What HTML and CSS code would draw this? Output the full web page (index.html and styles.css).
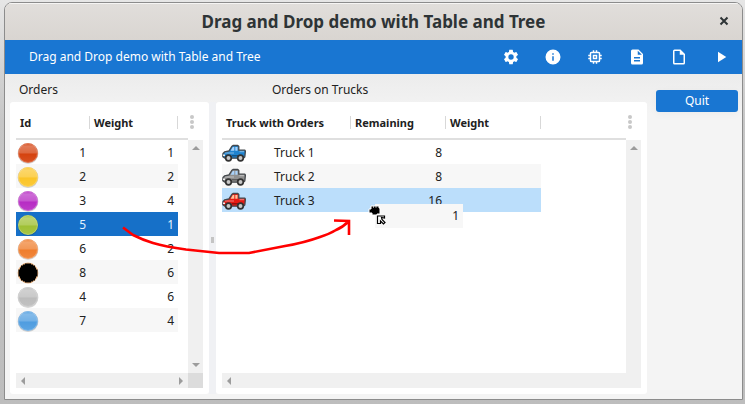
FILE: index.html
```html
<!DOCTYPE html>
<html lang="en">
<head>
<meta charset="utf-8">
<title>Drag and Drop demo with Table and Tree</title>
<link rel="stylesheet" href="styles.css">
</head>
<body>
<svg class="defs" aria-hidden="true">
  <defs>
    <linearGradient id="shade" x1="0" y1="0" x2="0" y2="1">
      <stop offset="0" stop-color="#fff" stop-opacity=".1"/>
      <stop offset=".15" stop-color="#fff" stop-opacity=".3"/>
      <stop offset=".5" stop-color="#fff" stop-opacity=".2"/>
      <stop offset=".55" stop-color="#fff" stop-opacity="0"/>
      <stop offset="1" stop-color="#fff" stop-opacity=".08"/>
    </linearGradient>
    <symbol id="ball" viewBox="1 1 22 22">
      <circle cx="12" cy="12.600" r="10.400" fill="#000" opacity=".16"/>
      <circle cx="12" cy="12" r="10" fill="currentColor"/>
      <circle cx="12" cy="12" r="9.500" fill="url(#shade)" stroke="#fff" stroke-opacity=".25"/>
    </symbol>
    <symbol id="truck" viewBox="0 0 24 18">
      <path d="M1 9.500 2.500 8 7 6.800 10 2.200 11 1.500h4.800l1 1V6.200h6l.6 1-.6 5.800-1.600 1.200H3L.8 12.600z" fill="currentColor" stroke="#44484c" stroke-width="1.300" stroke-linejoin="round"/>
      <path class="glass" d="m8.600 6.700 2.200-3.600h1.500v3.600z"/>
      <path class="glass" d="M13.300 3h2.200v3.700h-2.200z"/>
      <path d="M3 9h9M17.500 7.700H22" stroke="#fff" stroke-opacity=".45"/>
      <path d="M10 11.800h6" stroke="#000" stroke-opacity=".35" stroke-width="1.500"/>
      <path d="M1 10.500h2v1.600H1z" fill="#eee"/>
      <g fill="#c8c8c8" stroke="#333" stroke-width="1.700">
        <circle cx="6.500" cy="14" r="2.800"/><circle cx="18.500" cy="14" r="2.800"/>
      </g>
    </symbol>
  </defs>
</svg>
<main class="window">
  <header class="titlebar">
    <h1>Drag and Drop demo with Table and Tree</h1>
    <button class="close" aria-label="Close"><svg viewBox="0 0 10 10"><path d="m1.500 1.500 7 7m0-7-7 7"/></svg></button>
  </header>
  <nav class="toolbar">
    <span class="app-name">Drag and Drop demo with Table and Tree</span>
    <button aria-label="Settings"><svg viewBox="0 0 24 24"><path d="M19.14 12.94c.04-.3.06-.61.06-.94 0-.32-.02-.64-.07-.94l2.03-1.58a.49.49 0 0 0 .12-.61l-1.92-3.32a.49.49 0 0 0-.59-.22l-2.39.96c-.5-.38-1.03-.7-1.62-.94l-.36-2.54a.48.48 0 0 0-.48-.41h-3.84c-.24 0-.43.17-.47.41l-.36 2.54c-.59.24-1.13.57-1.62.94l-2.39-.96a.48.48 0 0 0-.59.22L2.74 8.87c-.12.21-.08.47.12.61l2.03 1.58c-.05.3-.09.63-.09.94s.02.64.07.94l-2.03 1.58a.49.49 0 0 0-.12.61l1.92 3.32c.12.22.37.29.59.22l2.39-.96c.5.38 1.03.7 1.62.94l.36 2.54c.05.24.24.41.48.41h3.84c.24 0 .44-.17.47-.41l.36-2.54c.59-.24 1.13-.56 1.62-.94l2.39.96c.22.08.47 0 .59-.22l1.92-3.32a.48.48 0 0 0-.12-.61zM12 15.600a3.600 3.600 0 1 1 0-7.200 3.600 3.600 0 0 1 0 7.200z"/></svg></button>
    <button aria-label="Info"><svg viewBox="0 0 24 24"><path d="M12 2a10 10 0 1 0 0 20 10 10 0 0 0 0-20zm1 15h-2v-6h2zm0-8h-2V7h2z"/></svg></button>
    <button aria-label="Memory"><svg viewBox="0 0 24 24"><path d="M15 9H9v6h6zm-2 4h-2v-2h2zm8-2V9h-2V7a2 2 0 0 0-2-2h-2V3h-2v2h-2V3H9v2H7a2 2 0 0 0-2 2v2H3v2h2v2H3v2h2v2a2 2 0 0 0 2 2h2v2h2v-2h2v2h2v-2h2a2 2 0 0 0 2-2v-2h2v-2h-2v-2zm-4 6H7V7h10z"/></svg></button>
    <button aria-label="Document"><svg viewBox="0 0 24 24"><path d="M14 2H6a2 2 0 0 0-2 2v16a2 2 0 0 0 2 2h12a2 2 0 0 0 2-2V8zm2 16H8v-2h8zm0-4H8v-2h8zm-3-5V3.500L18.500 9z"/></svg></button>
    <button aria-label="New file"><svg viewBox="0 0 24 24"><path d="M6 2a2 2 0 0 0-2 2v16a2 2 0 0 0 2 2h12a2 2 0 0 0 2-2V8l-6-6zm7 2v5h5v11H6V4z"/></svg></button>
    <button aria-label="Run"><svg viewBox="0 0 24 24"><path d="M8 5v14l11-7z"/></svg></button>
  </nav>
  <div class="content">
    <section class="pane orders">
      <h2>Orders</h2>
      <div class="panel">
        <div class="grid">
          <div class="view">
            <table>
              <colgroup><col class="c-id"><col class="c-rest"></colgroup>
              <thead><tr><th>Id</th><th>Weight</th></tr></thead>
              <tbody>
                <tr><td><div class="cell"><svg class="ball red"><use href="#ball"/></svg>1</div></td><td>1</td></tr>
                <tr><td><div class="cell"><svg class="ball yellow"><use href="#ball"/></svg>2</div></td><td>2</td></tr>
                <tr><td><div class="cell"><svg class="ball purple"><use href="#ball"/></svg>3</div></td><td>4</td></tr>
                <tr class="selected"><td><div class="cell"><svg class="ball green"><use href="#ball"/></svg>5</div></td><td>1</td></tr>
                <tr><td><div class="cell"><svg class="ball orange"><use href="#ball"/></svg>6</div></td><td>2</td></tr>
                <tr><td><div class="cell"><svg class="ball" viewBox="1 1 22 22"><circle cx="12" cy="12" r="10.400" fill="#edb27c"/><path d="M9 2.500h6v1h2v1h2v2h1v2h1.500v7H20v2h-1v2h-2v1h-2v1H9v-1H7v-1H5v-2H4v-2H2.500v-7H4v-2h1v-2h2v-1h2z" fill="#000"/></svg>8</div></td><td>6</td></tr>
                <tr><td><div class="cell"><svg class="ball silver"><use href="#ball"/></svg>4</div></td><td>6</td></tr>
                <tr><td><div class="cell"><svg class="ball blue"><use href="#ball"/></svg>7</div></td><td>4</td></tr>
              </tbody>
            </table>
          </div>
          <button class="more" aria-label="Columns"><i></i><i></i><i></i></button>
          <div class="vbar"><i class="up"></i><i class="down"></i></div>
          <div class="hbar"><i class="left"></i><i class="right"></i></div>
          <div class="corner"></div>
        </div>
      </div>
    </section>
    <div class="splitter"><i></i></div>
    <section class="pane trucks">
      <h2>Orders on Trucks</h2>
      <div class="panel">
        <div class="grid">
          <div class="view">
            <table>
              <colgroup><col class="c-truck"><col class="c-num"><col class="c-num"></colgroup>
              <thead><tr><th>Truck with Orders</th><th>Remaining</th><th>Weight</th></tr></thead>
              <tbody>
                <tr><td><div class="cell"><svg class="truck t-blue"><use href="#truck"/></svg>Truck 1</div></td><td>8</td><td></td></tr>
                <tr><td><div class="cell"><svg class="truck t-gray"><use href="#truck"/></svg>Truck 2</div></td><td>8</td><td></td></tr>
                <tr class="target"><td><div class="cell"><svg class="truck t-red"><use href="#truck"/></svg>Truck 3</div></td><td>16</td><td></td></tr>
              </tbody>
            </table>
          </div>
          <button class="more" aria-label="Columns"><i></i><i></i><i></i></button>
          <div class="vbar"><i class="up"></i></div>
          <div class="hbar"><i class="left"></i></div>
          <div class="corner plain"></div>
        </div>
      </div>
    </section>
    <aside><button class="quit">Quit</button></aside>
  </div>
  <svg class="arrow" viewBox="0 0 236 44" aria-hidden="true"><path d="M3 12.500 13 20c6 3 13 6 20 8 10 3 22 5 33 6.500L99 38h30l36-7c12-2 24-5 35-9 6-2 11-4 16-7 5-2 9-5 13-9M214 5.500 229 6v14"/></svg>
  <div class="ghost">1</div>
  <svg class="cursor" viewBox="0 0 20 20" aria-hidden="true">
    <path d="M1 4h2V1h8v2h1v6H9v1H4V8H1z" fill="#000" stroke="#fff" stroke-width="1"/>
    <path d="M5.500 1v2M8 1v2" stroke="#fff" stroke-width=".6"/>
    <path d="M9.500 11h7v2l-3-.5.500 2 3 3-1.500 1.500-3-3v2.500H9.500z" fill="#fff" stroke="#000" stroke-width="1.200"/>
  </svg>
</main>
</body>
</html>
```
FILE: styles.css
```css
* { box-sizing: border-box; }
body {
  margin: 0;
  height: 100vh;
  padding: 2px 2px 4px 4px;
  background: linear-gradient(#e6e6e6, #c6c6c6 30%, #bdbdbd);
  font: 12px/16px "Noto Sans", sans-serif;
  color: #212121;
}
h1, h2 { margin: 0; }
button { border: 0; padding: 0; font: inherit; background: none; }
.defs { position: absolute; width: 0; height: 0; }

.window {
  position: relative;
  height: 100%;
  display: flex;
  flex-direction: column;
  border: 1px solid #8c8c8c;
  border-radius: 8px 8px 0 0;
  background: #f4f4f4;
  overflow: hidden;
}
.titlebar {
  display: flex;
  align-items: center;
  height: 37px;
  padding-left: 36px;
  background: linear-gradient(#e1dedb, #d9d5d1);
  box-shadow: inset 0 1px #f6f5f4;
}
.titlebar h1 {
  flex: 1;
  text-align: center;
  font-size: 17px;
  line-height: 24px;
  color: #2e3436;
}
.close { width: 36px; height: 24px; }
.close svg { width: 10px; height: 10px; stroke: #2e3436; stroke-width: 2; }

.toolbar {
  display: flex;
  align-items: center;
  height: 34px;
  background: #1976d2;
  color: #fff;
}
.app-name { flex: 1; padding-left: 24px; }
.toolbar button { display: grid; place-items: center; width: 42px; height: 34px; }
.toolbar svg { width: 18px; height: 18px; fill: #fff; }

.content {
  flex: 1;
  display: flex;
  padding: 0 4px 5px 5px;
  background: linear-gradient(#ececec, #f4f4f4 40px);
}
.pane { display: flex; flex-direction: column; }
.pane h2 {
  height: 28px;
  padding: 8px 9px 0;
  font-size: 12px;
  line-height: 16px;
  font-weight: 400;
}
.orders { flex: 0 0 199px; }
.trucks { flex: 1; }
.trucks h2 { padding-left: 56px; }
.panel { flex: 1; padding: 6px; border-radius: 3px; background: #fff; }
.grid {
  height: 100%;
  display: grid;
  grid-template: 32px 1fr 15px / 1fr 15px;
}
.view {
  grid-area: 1 / 1 / 3 / 2;
  background: linear-gradient(#dfdfdf, #dfdfdf) 0 30px / 100% 2px no-repeat;
}

table { table-layout: fixed; border-collapse: collapse; }
.orders table { width: 162px; }
.trucks table { width: 319px; }
.c-id { width: 74px; }
.c-truck { width: 129px; }
th {
  height: 32px;
  padding: 0 4px 2px;
  font-size: 11px;
  text-align: left;
  white-space: nowrap;
  background: linear-gradient(#d8d8d8, #d8d8d8) 100% 8px / 1px 13px no-repeat;
}
td { height: 24px; padding: 2px 4px 0; text-align: right; }
tbody tr:nth-child(even) { background: #f7f7f7; }
tbody .selected:nth-child(n) { background: #1670c8; color: #e3f2fd; }
.target { background: #bbdefb; }
td:first-child { padding-left: 0; }
.cell { display: flex; align-items: center; height: 22px; }
.orders .cell { justify-content: space-between; padding-left: 1px; }
.trucks .cell { gap: 28px; }
.ball { width: 22px; height: 22px; }
.truck { width: 24px; height: 18px; }
.red { color: #d5420f; }
.yellow { color: #fbc528; }
.purple { color: #b72cc4; }
.green { color: #9fc034; }
.orange { color: #ef7d2c; }
.silver { color: #bcbcbc; }
.blue { color: #4f9de0; }
.glass { fill: var(--glass, #a9d2fa); }
.t-blue { color: #1f83cf; }
.t-gray { color: #909090; }
.t-red { color: #e61b14; --glass: #ffc29a; }

.more {
  display: grid;
  justify-content: start;
  align-content: center;
  gap: 1px;
  padding: 0 0 4px 2px;
}
.more i { width: 4px; height: 4px; border-radius: 50%; background: #c8c8c8; }
.vbar, .hbar { display: flex; justify-content: space-between; align-items: center; background: #f0f0f0; }
.vbar { flex-direction: column; grid-area: 2 / 2; padding: 6px 0; }
.hbar { grid-area: 3 / 1; padding: 0 5px; }
.corner { grid-area: 3 / 2; background: #dcdcdc; }
.plain { background: #f0f0f0; }
.vbar i, .hbar i { border: 4px solid transparent; }
.vbar .up { border-top: 0; border-bottom-color: #9c9c9c; }
.vbar .down { border-bottom: 0; border-top-color: #9c9c9c; }
.hbar .left { border-left: 0; border-right-color: #9c9c9c; }
.hbar .right { border-right: 0; border-left-color: #9c9c9c; }

.splitter { width: 7px; margin-top: 28px; padding-bottom: 16px; display: grid; place-items: center; background: #f0f1f4; }
.splitter i { width: 3px; height: 6px; background: #c4c4c4; }
aside { width: 91px; padding: 16px 0 0 9px; }
.quit {
  width: 100%;
  height: 22px;
  border-radius: 3px;
  background: #1976d2;
  color: #fff;
  box-shadow: 0 2px 8px rgba(0, 0, 0, .04);
}

.arrow { position: absolute; left: 115px; top: 212px; width: 236px; height: 44px; fill: none; stroke: #f00; stroke-width: 2.6; }
.ghost {
  position: absolute;
  left: 370px;
  top: 201px;
  width: 88px;
  height: 24px;
  padding: 4px;
  text-align: right;
  background: #f7f7f7;
}
.cursor { position: absolute; left: 363px; top: 202px; width: 20px; height: 20px; }
```
